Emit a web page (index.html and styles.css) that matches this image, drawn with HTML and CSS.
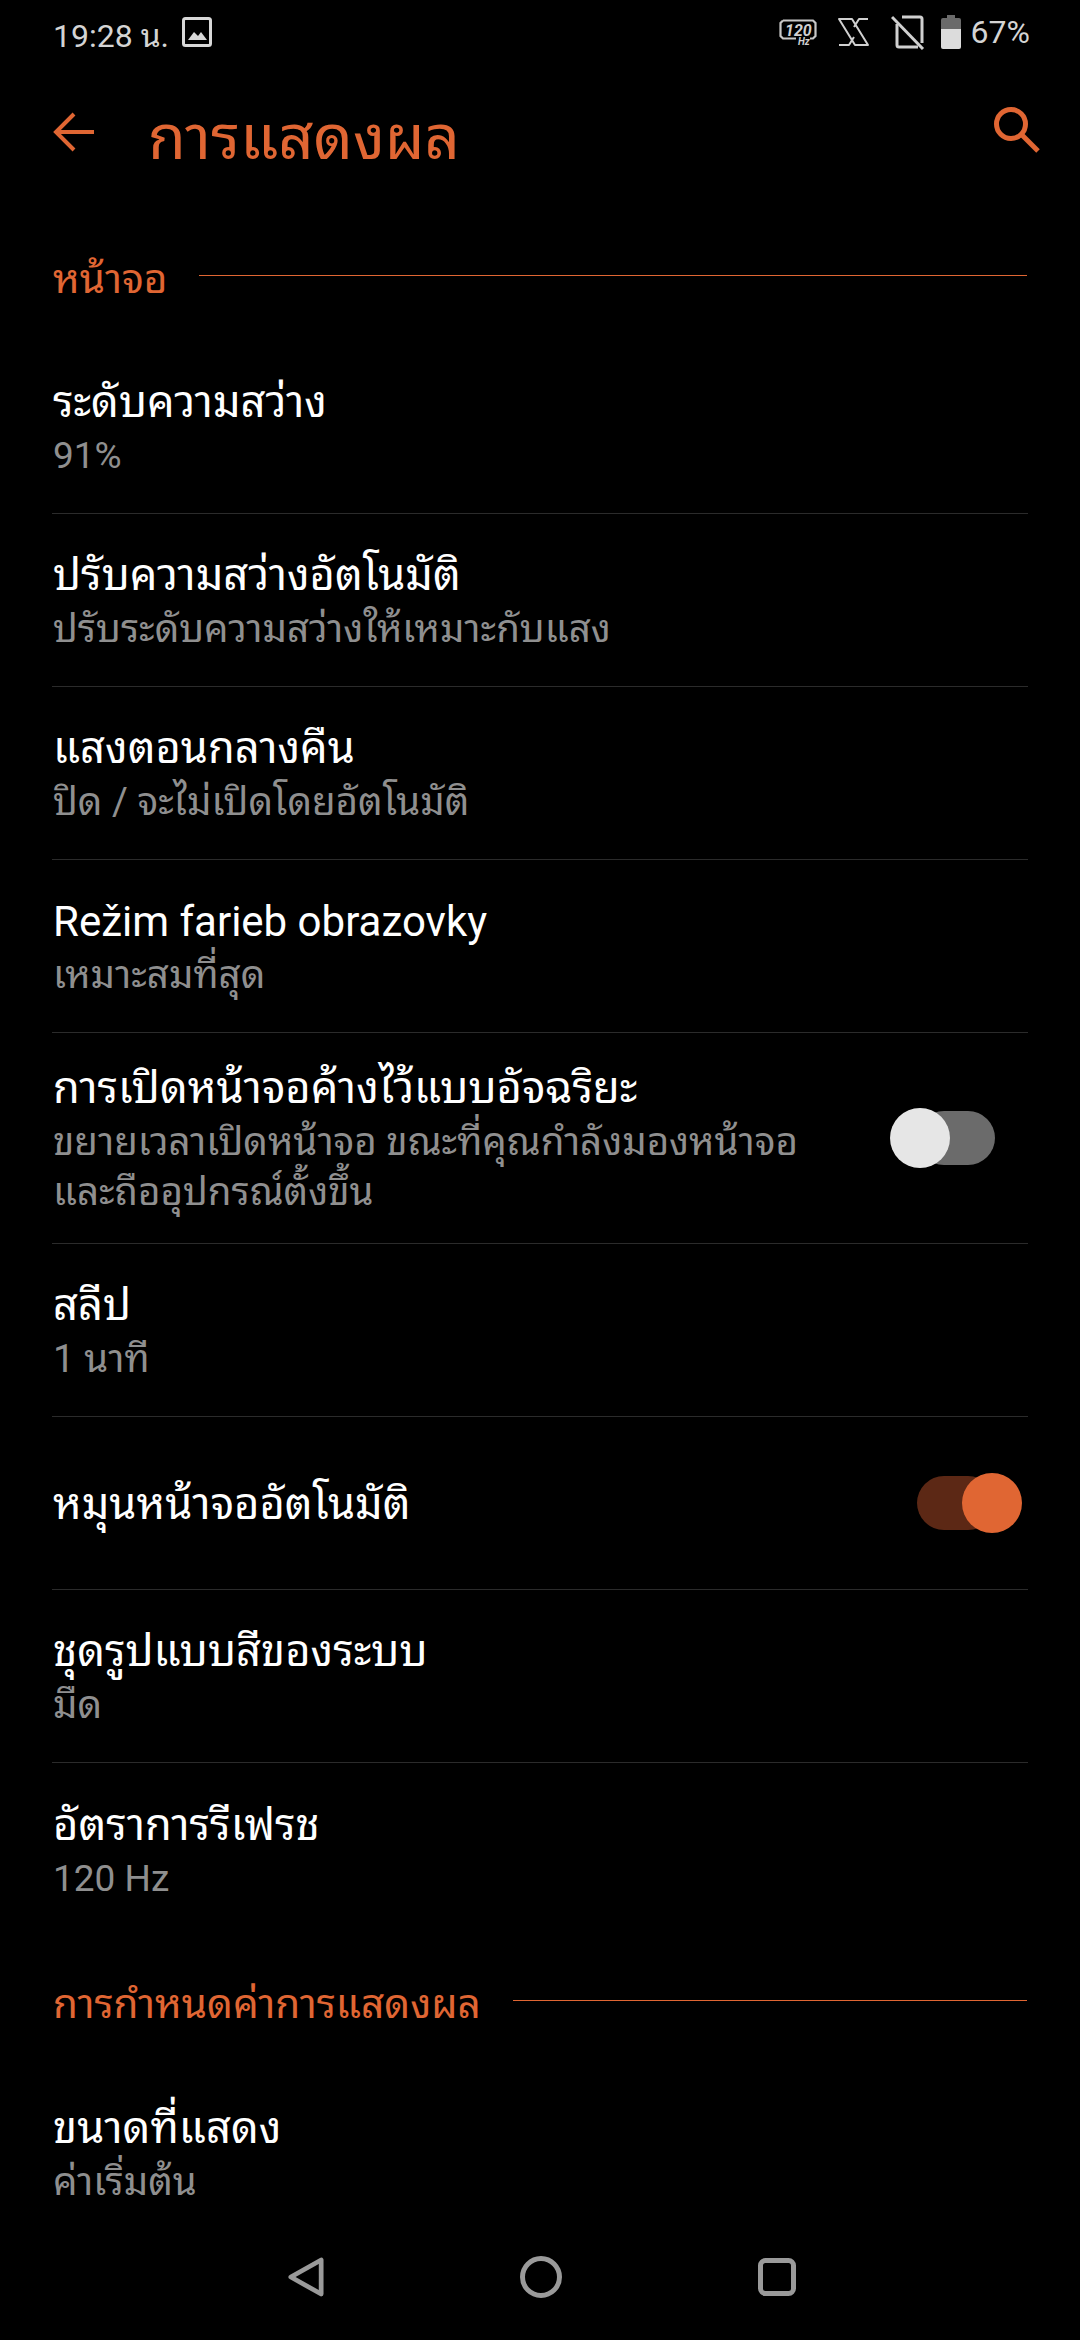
FILE: index.html
```html
<!DOCTYPE html>
<html lang="th">
<head>
<meta charset="utf-8">
<title>การแสดงผล</title>
<link rel="stylesheet" href="styles.css">
</head>
<body>
<div class="screen">
  <header class="status">
    <div class="status-left">
      <span>19:28 น.</span>
      <svg class="ic-image" viewBox="0 0 30 30"><rect x="1.5" y="1.5" width="27" height="27" rx="2" fill="none" stroke="#d8d8d8" stroke-width="3"/><path d="M6 23l6-8 4 4 3-4 6 8z" fill="#d8d8d8"/></svg>
    </div>
    <div class="status-right">
      <svg class="ic-hz" viewBox="0 0 38 26"><path d="M4 1.500h30l2.500 2.500v13l-2.500 2.500H31M17 19.500H4l-2.500-2.500V4L4 1.500" fill="none" stroke="#c8c8c8" stroke-width="2.200"/><text x="6" y="16.500" class="hz-num">120</text><text x="19" y="25.500" class="hz-unit">Hz</text></svg>
      <svg class="ic-x" viewBox="0 0 33 30"><path d="M2 2h13l16 26H18zM31 2H22l-5 8M2 28h10l5-8" fill="none" stroke="#d0d0d0" stroke-width="2" stroke-linejoin="round"/></svg>
      <svg class="ic-sim" viewBox="0 0 34 36"><path d="M11 3h18a2 2 0 0 1 2 2v24M27 33H8a2 2 0 0 1-2-2V10" fill="none" stroke="#d0d0d0" stroke-width="3"/><path d="M1 3l31 32" stroke="#d0d0d0" stroke-width="3"/></svg>
      <svg class="ic-batt" viewBox="0 0 20 34"><path d="M6 0h8v3h4a2 2 0 0 1 2 2v9H0V5a2 2 0 0 1 2-2h4z" fill="#6a6a6a"/><path d="M0 14h20v18a2 2 0 0 1-2 2H2a2 2 0 0 1-2-2z" fill="#dcdcdc"/></svg>
      <span>67%</span>
    </div>
  </header>

  <div class="appbar">
    <svg class="ic-back" viewBox="0 0 42 42"><path d="M42 21H4M22 3L4 21l18 18" fill="none" stroke="#e06633" stroke-width="4"/></svg>
    <h1 class="title">การแสดงผล</h1>
    <svg class="ic-search" viewBox="0 0 46 46"><circle cx="17" cy="17" r="14.5" fill="none" stroke="#e06633" stroke-width="5"/><path d="M27 27l17 17" stroke="#e06633" stroke-width="5"/></svg>
  </div>

  <main class="list">
    <div class="section first"><span>หน้าจอ</span><i></i></div>
    <div class="row"><div class="main">ระดับความสว่าง</div><div class="sub lat">91%</div></div>
    <div class="row"><div class="main">ปรับความสว่างอัตโนมัติ</div><div class="sub">ปรับระดับความสว่างให้เหมาะกับแสง</div></div>
    <div class="row"><div class="main">แสงตอนกลางคืน</div><div class="sub">ปิด / จะไม่เปิดโดยอัตโนมัติ</div></div>
    <div class="row"><div class="main lat">Režim farieb obrazovky</div><div class="sub">เหมาะสมที่สุด</div></div>
    <div class="row tall">
      <div class="text"><div class="main">การเปิดหน้าจอค้างไว้แบบอัจฉริยะ</div><div class="sub">ขยายเวลาเปิดหน้าจอ ขณะที่คุณกำลังมองหน้าจอ<br>และถืออุปกรณ์ตั้งขึ้น</div></div>
      <div class="switch off"><b></b></div>
    </div>
    <div class="row"><div class="main">สลีป</div><div class="sub">1 นาที</div></div>
    <div class="row">
      <div class="text"><div class="main">หมุนหน้าจออัตโนมัติ</div></div>
      <div class="switch on"><b></b></div>
    </div>
    <div class="row"><div class="main">ชุดรูปแบบสีของระบบ</div><div class="sub">มืด</div></div>
    <div class="row last"><div class="main">อัตราการรีเฟรช</div><div class="sub lat">120 Hz</div></div>
    <div class="section"><span>การกำหนดค่าการแสดงผล</span><i></i></div>
    <div class="row last"><div class="main">ขนาดที่แสดง</div><div class="sub">ค่าเริ่มต้น</div></div>
  </main>

  <nav class="navbar">
    <svg class="ic-nav-back" viewBox="0 0 38 42"><path d="M3 21L35 3v36z" fill="none" stroke="#9a9a9a" stroke-width="5" stroke-linejoin="round"/></svg>
    <svg class="ic-nav-home" viewBox="0 0 42 42"><circle cx="21" cy="21" r="18.5" fill="none" stroke="#9a9a9a" stroke-width="5"/></svg>
    <svg class="ic-nav-recent" viewBox="0 0 38 38"><rect x="2.500" y="2.500" width="33" height="33" rx="5" fill="none" stroke="#9a9a9a" stroke-width="5"/></svg>
  </nav>
</div>
</body>
</html>
```
FILE: styles.css
```css
* { box-sizing: border-box; }
html, body { margin: 0; padding: 0; background: #000; }
body { font-family: Roboto, "Noto Sans Thai Looped", "Noto Sans", "Noto Sans Thai", sans-serif; }
.screen { width: 1080px; height: 2340px; display: flex; flex-direction: column; overflow: hidden; background: #000; }

.status { height: 64px; flex: none; display: flex; justify-content: space-between; align-items: center; padding: 0 52px 0 53px; color: #d4d4d4; font-size: 32px; }
.status-left, .status-right { display: flex; align-items: center; }
.ic-image { width: 30px; height: 30px; margin-left: 13px; }
.status-right { margin-right: -2px; }
.ic-hz { width: 38px; height: 26px; }
.ic-x { width: 33px; height: 30px; margin-left: 20px; }
.ic-sim { width: 34px; height: 36px; margin-left: 21px; }
.ic-batt { width: 20px; height: 34px; margin-left: 16px; margin-right: 10px; }
.hz-num { font: italic 700 16px Roboto, sans-serif; fill: #d0d0d0; }
.hz-unit { font: italic 700 10px Roboto, sans-serif; fill: #d0d0d0; }

.appbar { height: 181px; flex: none; display: flex; align-items: center; padding: 0 40px 31px 52px; }
.ic-back { width: 42px; height: 42px; flex: none; margin-top: -14px; }
.title { flex: 1; margin: 0 0 16px 54px; font-size: 61.500px; font-weight: 400; color: #e06633; }
.ic-search { width: 46px; height: 46px; flex: none; margin-top: -19px; }

.list { flex: 1; min-height: 0; overflow: hidden; padding: 0 52px; }
.section { display: flex; align-items: center; gap: 32px; color: #e06633; font-size: 40.500px; height: 60px; margin-top: 34px; margin-bottom: 36px; }
.section.first { margin-top: 0; }
.section span { flex: none; margin: -2px 0 0 1px; }
.section i { flex: 1; height: 1px; background: #e06633; margin-right: 1px; }

.row { height: 173px; padding-top: 3px; display: flex; flex-direction: column; justify-content: center; border-bottom: 1px solid #2b2b2b; }
.row.last { border-bottom: 0; }
.row.tall { height: 211px; }
.row:has(.switch) { padding-top: 0; flex-direction: row; align-items: center; justify-content: space-between; }
.text { padding-top: 3px; }
.main { font-size: 43.500px; color: #fff; line-height: 54px; white-space: nowrap; margin-left: 1px; }
.main.lat { font-size: 42px; }
.sub { font-size: 38.500px; color: #8f8f8f; line-height: 50px; margin-top: 1px; margin-left: 1px; white-space: nowrap; }
.sub.lat { font-size: 37px; }

.switch { position: relative; width: 78px; height: 54px; flex: none; border-radius: 27px; margin-right: 33px; }
.switch b { position: absolute; top: -3px; width: 60px; height: 60px; border-radius: 50%; }
.switch.off { background: #6b6b6b; }
.switch.off b { left: -27px; background: #e6e6e6; }
.switch.on { background: #5c2815; }
.switch.on b { right: -27px; background: #e06633; }

.navbar { height: 126px; flex: none; display: flex; align-items: center; justify-content: center; padding-left: 3px; background: #000; }
.ic-nav-back { width: 36px; height: 40px; }
.ic-nav-home { width: 42px; height: 42px; margin-left: 196px; }
.ic-nav-recent { width: 38px; height: 38px; margin-left: 196px; }
```
